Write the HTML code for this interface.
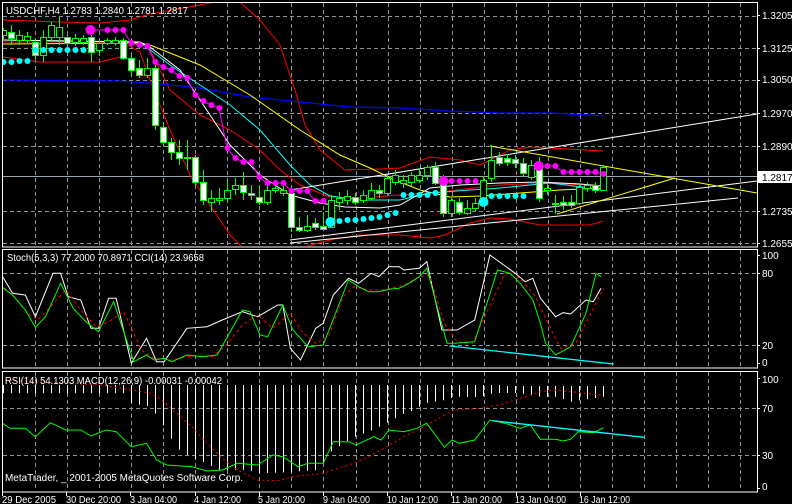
<!DOCTYPE html>
<html><head><meta charset="utf-8"><style>
html,body{margin:0;padding:0;background:#000;width:792px;height:504px;overflow:hidden}
svg{display:block}
text{font-family:"Liberation Sans","DejaVu Sans",sans-serif;font-size:10px;fill:#fff}
</style></head><body>
<svg id="s" width="792" height="504" viewBox="0 0 792 504" xmlns="http://www.w3.org/2000/svg">
<defs>
<clipPath id="cm"><rect x="3" y="3" width="754" height="243"/></clipPath>
<clipPath id="cs"><rect x="3" y="250" width="754" height="118"/></clipPath>
<clipPath id="cr"><rect x="3" y="372" width="754" height="120"/></clipPath>
</defs>
<g id="grid" stroke="#8a96a0" stroke-width="1" stroke-dasharray="4,3" fill="none"></g>
<line x1="3" y1="176.5" x2="757" y2="176.5" stroke="#9aa4ac"/>
<g id="main" clip-path="url(#cm)"></g>
<g id="stoch" clip-path="url(#cs)"></g>
<g id="rsi" clip-path="url(#cr)"></g>
<g fill="none" stroke="#fff" stroke-width="1">
<rect x="2.5" y="2.5" width="755" height="244.5"/>
<rect x="2.5" y="249.5" width="755" height="118.5"/>
<rect x="2.5" y="371.5" width="755" height="120.5"/>
</g>
<g id="ticks" stroke="#fff"></g>
<text x="6" y="14" textLength="182" lengthAdjust="spacingAndGlyphs">USDCHF,H4  1.2783 1.2840 1.2781 1.2817</text>
<text x="7" y="261" textLength="197" lengthAdjust="spacingAndGlyphs">Stoch(5,3,3) 77.2000 70.8971  CCI(14) 23.9658</text>
<text x="5" y="384" textLength="217" lengthAdjust="spacingAndGlyphs">RSI(14) 54.1303  MACD(12,26,9) -0.00031 -0.00042</text>
<text x="5" y="481" textLength="238" lengthAdjust="spacingAndGlyphs">MetaTrader, _ 2001-2005 MetaQuotes Software Corp.</text>
<g>
<text x="762" y="19">1.3205</text>
<text x="762" y="52">1.3125</text>
<text x="762" y="83">1.3050</text>
<text x="762" y="117">1.2970</text>
<text x="762" y="150">1.2890</text>
<text x="762" y="215">1.2735</text>
<text x="762" y="247">1.2655</text>
<rect x="758" y="171" width="34" height="12" fill="#fff"/>
<text x="762" y="181" style="fill:#000">1.2817</text>
<text x="762" y="259">100</text>
<text x="762" y="277">80</text>
<text x="762" y="349">20</text>
<text x="762" y="366">0</text>
<text x="762" y="383">100</text>
<text x="762" y="412">70</text>
<text x="762" y="459">30</text>
<text x="762" y="490">0</text>
</g>
<g>
<text x="2" y="503" textLength="54" lengthAdjust="spacingAndGlyphs">29 Dec 2005</text>
<text x="66" y="503" textLength="55" lengthAdjust="spacingAndGlyphs">30 Dec 20:00</text>
<text x="130" y="503" textLength="47" lengthAdjust="spacingAndGlyphs">3 Jan 04:00</text>
<text x="194" y="503" textLength="47" lengthAdjust="spacingAndGlyphs">4 Jan 12:00</text>
<text x="258" y="503" textLength="47" lengthAdjust="spacingAndGlyphs">5 Jan 20:00</text>
<text x="323" y="503" textLength="47" lengthAdjust="spacingAndGlyphs">9 Jan 04:00</text>
<text x="387" y="503" textLength="51" lengthAdjust="spacingAndGlyphs">10 Jan 12:00</text>
<text x="451" y="503" textLength="51" lengthAdjust="spacingAndGlyphs">11 Jan 20:00</text>
<text x="515" y="503" textLength="51" lengthAdjust="spacingAndGlyphs">13 Jan 04:00</text>
<text x="579" y="503" textLength="51" lengthAdjust="spacingAndGlyphs">16 Jan 12:00</text>
</g>
</svg>
<script>
var NS="http://www.w3.org/2000/svg";
function el(p,t,a){var e=document.createElementNS(NS,t);for(var k in a)e.setAttribute(k,a[k]);p.appendChild(e);return e;}
var G=document.getElementById('grid'),M=document.getElementById('main'),S=document.getElementById('stoch'),R=document.getElementById('rsi'),T=document.getElementById('ticks');
for(var k=0;k<23;k++){var x=Math.round(35+32.05*k)+0.5;
 el(G,'line',{x1:x,y1:3,x2:x,y2:246});el(G,'line',{x1:x,y1:250,x2:x,y2:367});el(G,'line',{x1:x,y1:372,x2:x,y2:491});}
[16,48,80,113,146,211,243].forEach(function(y){el(G,'line',{x1:3,y1:y+.5,x2:757,y2:y+.5});});
[273,345,408,455].forEach(function(y){el(G,'line',{x1:3,y1:y+.5,x2:757,y2:y+.5});});
[15,48,80,113,146,176,211,243,255,273,345,363,378,408,455,488].forEach(function(y){el(T,'line',{x1:757,y1:y+.5,x2:760,y2:y+.5});});
for(var k=0;k<10;k++){var x=Math.round(2+64.2*k)+.5;el(T,'line',{x1:x,y1:492,x2:x,y2:496});}
function P(a){return a.map(function(p){return p[0]+','+p[1]}).join(' ');}
function line(g,a,c,w,d){var o={points:P(a),fill:'none',stroke:c,'stroke-width':w||1};if(d)o['stroke-dasharray']=d;el(g,'polyline',o);}
// main lines
line(M,[[3,42],[140,42],[150,50],[170,90],[200,115],[230,130],[260,150],[280,170],[300,185],[330,197],[360,198],[400,195],[440,192],[500,185],[550,183],[603,186]],'#f00');
line(M,[[3,20],[60,22],[100,23],[130,20],[150,14],[200,5],[235,-2],[260,20],[280,45],[295,90],[305,125],[320,150],[345,170],[380,169],[400,168],[430,157],[460,160],[480,165],[490,160],[510,150],[530,147],[550,148],[585,150],[603,151]],'#f00');
line(M,[[3,57],[40,62],[100,62],[120,57],[128,45],[140,52],[150,80],[170,130],[190,175],[210,205],[230,235],[245,250],[300,248],[330,240],[360,235],[400,235],[430,238],[445,235],[470,223],[490,218],[510,219],[540,225],[575,225],[590,225],[603,221]],'#f00');
line(M,[[3,80],[120,81],[160,84],[200,88],[250,97],[300,102],[350,107],[400,108],[450,111],[500,113],[550,113],[590,115],[603,116]],'#0000ff',1.3);
line(M,[[3,44],[140,43],[150,45],[200,65],[250,95],[300,130],[340,155],[370,168],[395,180],[420,190],[450,197],[480,196],[520,193],[560,190],[603,188]],'#ff0');
line(M,[[3,40],[140,42],[170,65],[200,85],[230,105],[260,130],[290,165],[310,185],[330,196],[360,200],[400,200],[430,193],[470,190],[500,188],[550,183],[590,188],[603,190]],'#0ff');
line(M,[[3,40],[140,42],[150,47],[180,70],[200,100],[230,145],[260,175],[290,195],[320,203],[345,207],[380,208],[400,205],[430,188],[460,185],[500,183],[540,182],[580,184],[603,186]],'#fff');
// trend lines
line(M,[[290,190],[757,114]],'#fff');
line(M,[[290,240],[757,181]],'#fff');
line(M,[[290,243],[738,198]],'#fff');
line(M,[[490,146],[757,193]],'#ff0');
line(M,[[557,214],[675,178]],'#ff0');
// candles
var C=[[3,'g',30,35,28,40],[11,'w',32,38,25,45],[19,'g',35,40,30,45],[27,'g',36,40,32,44],[35,'w',42,55,38,60],[43,'g',37,55,30,62],[51,'g',25,37,22,42],[59,'g',27,37,17,45],[67,'w',37,43,35,45],[75,'g',38,42,34,46],[83,'g',38,42,35,45],[91,'w',37,52,35,62],[99,'g',43,50,40,55],[107,'g',40,43,38,45],[115,'g',40,43,37,46],[123,'w',40,58,38,60],[131,'w',58,70,55,77],[139,'w',68,75,60,78],[147,'g',68,75,58,78],[155,'w',68,125,65,130],[163,'w',127,142,122,147],[171,'w',142,152,138,160],[179,'w',152,158,140,165],[187,'g',157,158,140,170],[195,'w',157,182,155,185],[203,'w',182,200,170,205],[211,'g',198,202,190,212],[219,'g',198,200,188,205],[227,'g',190,198,180,202],[235,'g',185,189,178,195],[243,'w',185,192,172,200],[251,'w',193,195,185,200],[259,'w',197,202,185,205],[267,'g',190,202,185,205],[275,'g',188,190,183,193],[283,'g',190,193,186,196],[291,'w',193,227,190,232],[299,'w',227,230,217,232],[307,'g',226,230,215,232],[315,'w',223,227,218,230],[323,'w',226,229,212,230],[331,'g',200,227,195,228],[339,'g',198,202,192,210],[347,'g',196,200,190,205],[355,'w',197,202,193,205],[363,'g',195,200,190,203],[371,'g',190,198,183,200],[379,'w',190,193,185,198],[387,'g',178,193,175,196],[395,'g',175,182,170,185],[403,'g',180,183,175,188],[411,'g',175,182,172,186],[419,'g',175,180,168,183],[427,'g',167,175,165,180],[435,'w',167,183,162,185],[443,'w',178,213,175,217],[451,'g',200,213,198,217],[459,'w',202,212,198,215],[467,'g',208,213,200,215],[475,'g',203,208,198,212],[483,'g',180,200,176,203],[491,'g',160,178,145,182],[499,'w',157,163,152,166],[507,'w',158,162,154,166],[515,'w',159,163,155,168],[523,'w',163,173,158,176],[531,'g',165,177,160,180],[539,'w',163,198,157,202],[547,'g',188,190,183,195],[555,'g',203,204,195,214],[563,'w',202,205,196,210],[571,'w',202,205,195,208],[579,'g',187,203,183,205],[587,'g',185,188,182,192],[595,'w',185,190,182,193],[603,'g',167,190,165,191]];
C.forEach(function(c){var x=c[0];el(M,'line',{x1:x+.5,y1:c[4],x2:x+.5,y2:c[5],stroke:'#0f0'});
 el(M,'rect',{x:x-2.5,y:c[2]+.5,width:6,height:Math.max(c[3]-c[2],1),fill:c[1]=='w'?'#fff':'#000',stroke:'#0f0'});});
// PSAR dots
function dots(a,c,r){a.forEach(function(p){el(M,'circle',{cx:p[0]+.5,cy:p[1],r:p[2]||r,fill:c});});}
var mg=[[90,30,5],[107,30],[115,30],[123,30],[131,43],[139,45],[147,46],[155,62],[163,67],[171,70],[179,76],[187,78],[195,95],[203,101],[211,105],[219,108],[227,148],[235,158],[243,162],[251,162],[259,177],[267,183],[275,183],[283,183],[291,191],[299,191],[307,191],[315,201],[323,201],[443,181,5],[451,181],[459,181],[467,181],[475,181],[538,166,5],[547,166],[555,166],[563,172],[571,172],[579,172],[587,172],[595,172],[603,174]];
line(M,mg.slice(0,29),'#f0f');line(M,mg.slice(34),'#f0f');
dots(mg,'#f0f',3);
var cy=[[3,62],[11,62],[19,61],[27,61],[35,50],[43,50],[51,50],[59,50],[67,50],[75,50],[83,50],[330,222,5],[339,221],[347,220],[355,220],[363,219],[371,218],[379,217],[387,215],[395,213],[403,195],[411,195],[419,195],[427,195],[435,193],[483,202,5],[491,196],[499,196],[507,196],[515,196],[523,196]];
dots(cy,'#0ff',3);
// stoch
function cv(a,ox,oy){return a.map(function(p){return [ +(p[0]/1.98+ox).toFixed(1), +(p[1]/3+oy).toFixed(1)];});}
line(S,cv([[0,97],[25,160],[50,165],[70,230],[105,100],[120,100],[135,170],[160,180],[180,265],[195,265],[215,175],[230,175],[260,370],[290,295],[310,365],[325,365],[370,265],[410,260],[440,240],[480,215],[510,230],[550,195],[560,195],[575,325],[595,360],[625,265],[640,250],[660,165],[690,115],[710,130],[735,100],[750,110],[770,80],[790,80],[800,90],[830,85],[845,65],[875,270],[905,270],[940,240],[970,45],[1020,100],[1040,125],[1055,115],[1070,175],[1100,230],[1115,218],[1130,222],[1160,180],[1175,185],[1190,145]],0,240),'#fff');
line(S,cv([[0,130],[30,175],[55,220],[75,240],[100,200],[130,150],[160,210],[190,260],[215,245],[245,215],[280,330],[305,355],[340,360],[380,348],[420,350],[445,320],[480,255],[510,225],[540,265],[575,220],[600,280],[625,310],[650,290],[680,170],[700,140],[730,150],[760,150],[800,135],[830,110],[850,105],[880,250],[905,305],[935,310],[960,230],[1000,100],[1030,115],[1060,170],[1085,250],[1110,325],[1140,310],[1170,220],[1195,145]],0,240),'#f00',1,'3,3');
line(S,cv([[0,137],[25,165],[50,210],[70,262],[90,230],[120,130],[145,205],[170,245],[195,275],[225,185],[265,365],[290,345],[305,360],[325,355],[340,365],[370,345],[400,350],[430,345],[480,210],[495,215],[515,285],[530,290],[560,195],[580,270],[610,320],[640,315],[690,120],[710,140],[730,155],[750,155],[770,148],[790,145],[810,130],[830,110],[845,85],[885,310],[900,310],[940,305],[985,90],[1010,100],[1030,130],[1055,180],[1070,250],[1080,310],[1100,345],[1130,320],[1160,220],[1180,100],[1190,110]],0,240),'#0f0');
line(S,cv([[890,318],[1215,372]],0,240),'#0ff',1.3);
// rsi histogram
var H=cv([[0,100],[250,100],[260,130],[300,140],[310,170],[325,200],[340,240],[355,270],[370,285],[390,300],[410,310],[430,330],[490,330],[510,340],[550,338],[630,330],[650,280],[670,260],[690,240],[710,225],[730,215],[750,200],[770,185],[800,160],[820,150],[840,130],[880,120],[900,110],[950,112],[975,100],[990,95],[1010,95],[1030,100],[1070,110],[1100,110],[1130,125],[1195,110]],0,360);
function interp(x){for(var i=1;i<H.length;i++){if(x<=H[i][0]){var a=H[i-1],b=H[i];return a[1]+(b[1]-a[1])*(x-a[0])/(b[0]-a[0]);}}return H[H.length-1][1];}
for(var i=0;i<76;i++){var x=3+8*i;var yb=Math.max(interp(x),393);var yt=x>500?386:385;el(R,'line',{x1:x+.5,y1:yt,x2:x+.5,y2:yb,stroke:'#fff'});}
line(R,cv([[0,60],[200,75],[260,90],[300,100],[320,120],[350,160],[380,200],[410,250],[440,295],[470,330],[510,360],[550,362],[580,350],[610,345],[640,340],[660,330],[700,310],[730,290],[760,265],[800,230],[840,200],[880,165],[900,150],[950,145],[990,135],[1030,115],[1070,95],[1100,90],[1130,95],[1160,100],[1190,105]],0,360),'#f00',1,'2,3');
line(R,cv([[5,190],[20,205],[50,205],[70,230],[100,188],[130,210],[160,210],[180,228],[210,210],[230,215],[260,260],[290,250],[310,300],[330,315],[380,320],[410,333],[440,330],[470,310],[510,315],[540,285],[560,290],[590,320],[610,310],[640,310],[660,245],[690,245],[705,255],[740,230],[755,240],[770,210],[800,215],[825,205],[845,190],[880,262],[895,240],[910,250],[940,240],[970,180],[1000,190],[1030,205],[1050,195],[1070,238],[1100,238],[1115,243],[1130,238],[1145,215],[1175,218],[1195,203]],0,360),'#0f0');
line(R,cv([[975,182],[1275,232]],0,360),'#0ff',1.3);
</script>
</body></html>
